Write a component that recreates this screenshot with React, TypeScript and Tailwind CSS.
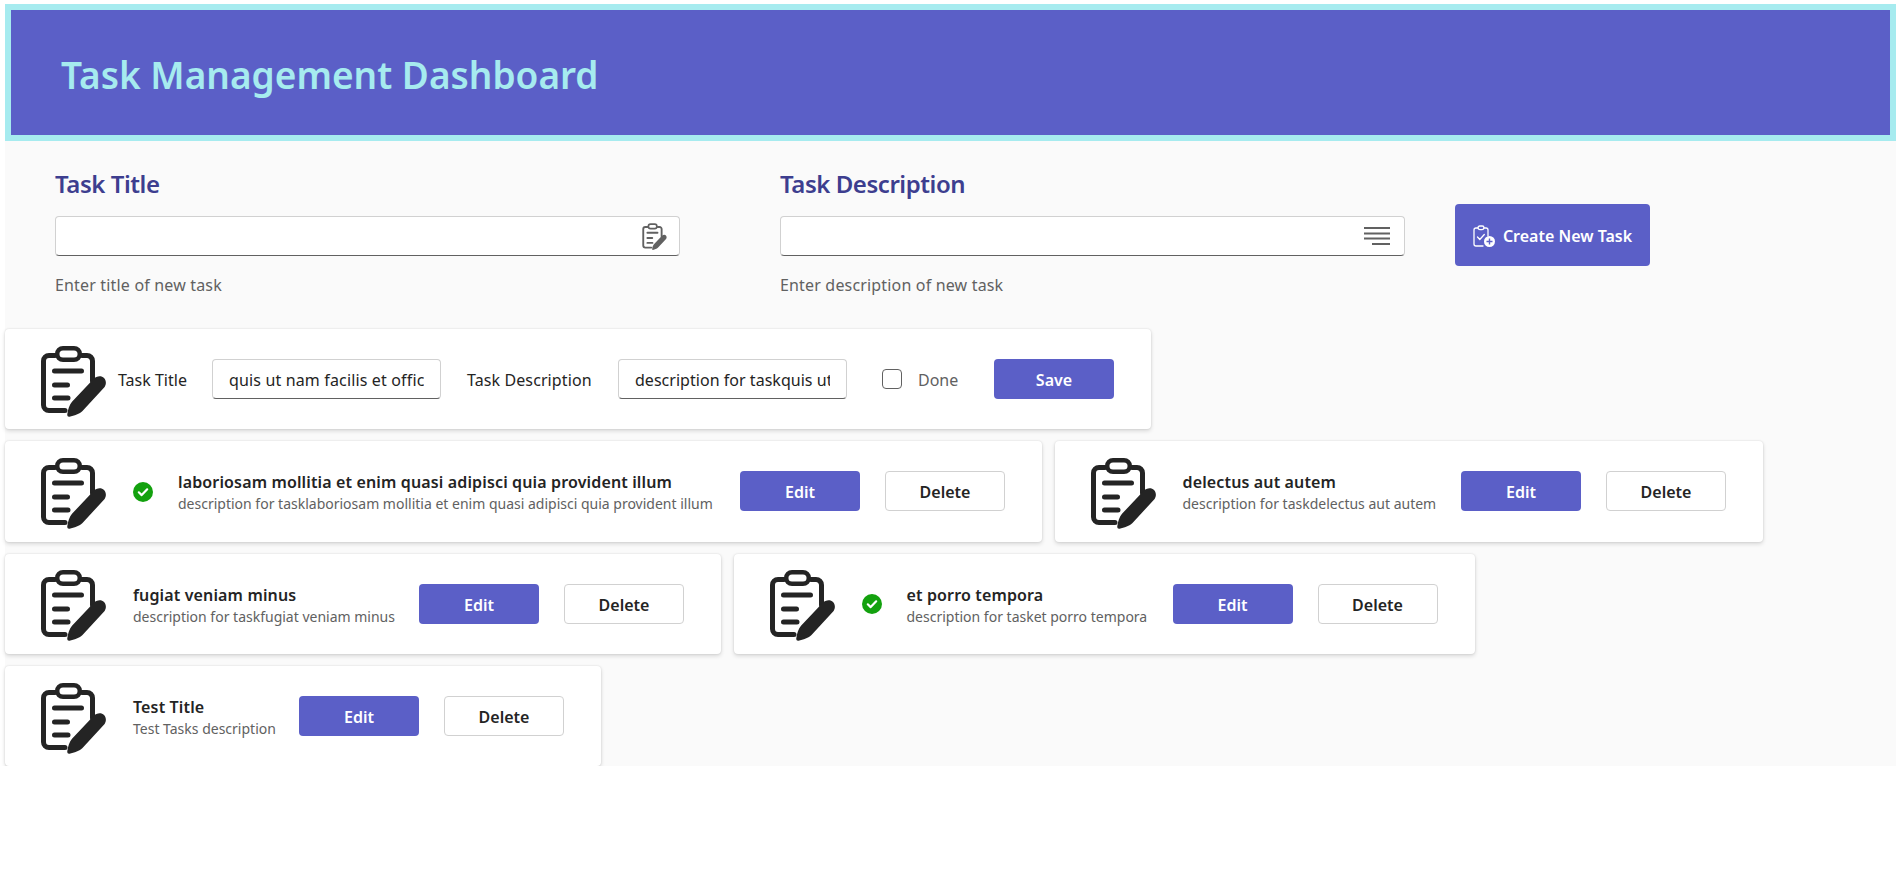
import React from "react";

const FONT = "font-['Noto_Sans','Open_Sans',sans-serif]";

function TaskIcon({ className = "", color = "#242424" }: { className?: string; color?: string }) {
  return (
    <svg viewBox="0 0 65 72" className={className} fill="none" aria-hidden="true">
      <path d="M14 10.5H8a5.5 5.5 0 0 0-5.5 5.5v44A5.5 5.5 0 0 0 8 65.5h16" stroke={color} strokeWidth="5" strokeLinecap="round" />
      <path d="M41 10.5h5a5.5 5.5 0 0 1 5.5 5.5v20" stroke={color} strokeWidth="5" strokeLinecap="round" />
      <rect x="16.2" y="3.2" width="22.6" height="11.6" rx="5.8" stroke={color} strokeWidth="4.5" />
      <path d="M13.500 26h27M13.500 40h13M13.500 53h13.500" stroke={color} strokeWidth="5" strokeLinecap="round" />
      <path d="M52.500 34c3.200-3.200 8-3.500 10.500-1 2.800 2.800 2.300 7.300-.3 10L41.500 66c-2.700 2.700-8.300 4.700-13 5.700-1.500.3-2.500-.7-2.200-2.500.7-5 2.200-9.400 4.700-12.400z" fill={color} />
    </svg>
  );
}

function LinesIcon() {
  return (
    <svg viewBox="0 0 26 18" className="h-[18px] w-[26px]" fill="none" aria-hidden="true">
      <path d="M0 1h26M0 6.500h26M0 11.500h26M8 17h18" stroke="#616161" strokeWidth="2.200" />
    </svg>
  );
}

function CreateIcon() {
  return (
    <svg viewBox="0 0 22 22" className="h-[22px] w-[22px]" fill="none" aria-hidden="true">
      <path d="M5 3H3a2 2 0 0 0-2 2v14a2 2 0 0 0 2 2h7M11 3h2a2 2 0 0 1 2 2v6" stroke="white" strokeWidth="1.300" strokeLinecap="round" />
      <rect x="5" y="1" width="6" height="3.600" rx="1.800" stroke="white" strokeWidth="1.300" />
      <path d="M4.500 12l2.300 2.500 4.500-5" stroke="white" strokeWidth="1.300" strokeLinecap="round" strokeLinejoin="round" />
      <circle cx="16.500" cy="16.500" r="5.500" fill="white" />
      <path d="M16.500 13.500v6M13.500 16.500h6" stroke="#5b5fc7" strokeWidth="1.400" />
    </svg>
  );
}

function DoneIcon() {
  return (
    <svg viewBox="0 0 20 20" className="h-5 w-5 shrink-0" aria-hidden="true">
      <circle cx="10" cy="10" r="10" fill="#13a10e" />
      <path d="M5.800 10.300l2.900 2.800 5.500-5.800" fill="none" stroke="white" strokeWidth="2.200" strokeLinecap="round" strokeLinejoin="round" />
    </svg>
  );
}

type Task = { title: string; description: string; done?: boolean; textWidth: string };

const tasks: Task[] = [
  { title: "laboriosam mollitia et enim quasi adipisci quia provident illum", description: "description for tasklaboriosam mollitia et enim quasi adipisci quia provident illum", done: true, textWidth: "w-[537px]" },
  { title: "delectus aut autem", description: "description for taskdelectus aut autem", textWidth: "w-[253.5px]" },
  { title: "fugiat veniam minus", description: "description for taskfugiat veniam minus", textWidth: "w-[261px]" },
  { title: "et porro tempora", description: "description for tasket porro tempora", done: true, textWidth: "w-[241px]" },
  { title: "Test Title", description: "Test Tasks description", textWidth: "w-[141px]" },
];

const cardClass =
  "flex h-[100.33px] items-center rounded-[4px] bg-white pl-[36px] pr-[37px] shadow-[0_2px_4px_rgba(0,0,0,0.14),0_0_2px_rgba(0,0,0,0.12)]";
const primaryClass =
  "flex h-10 w-[120px] items-center justify-center rounded-[4px] bg-[#5b5fc7] pt-[2px] text-base font-semibold text-white";

function TaskCard({ task }: { task: Task }) {
  return (
    <div className={cardClass}>
      <TaskIcon className="mt-[3px] h-[72px] w-[65px] shrink-0" />
      {task.done ? (
        <div className="ml-[27px] mt-[1px]">
          <DoneIcon />
        </div>
      ) : null}
      <div className={`${task.done ? "ml-[25px]" : "ml-[27px]"} ${task.textWidth} flex flex-col pt-[3px]`}>
        <div className="whitespace-nowrap text-base font-semibold leading-[23px] tracking-[0.14px] text-[#242424]">{task.title}</div>
        <div className="whitespace-nowrap text-sm leading-[20px] text-[#616161]">{task.description}</div>
      </div>
      <button className={`ml-[25px] ${primaryClass}`}>Edit</button>
      <button className="ml-[25px] h-10 w-[120px] rounded-[4px] border border-[#d1d1d1] bg-white pt-[2px] text-base font-semibold text-[#242424]">
        Delete
      </button>
    </div>
  );
}

function EditInput({ value, tracking }: { value: string; tracking: string }) {
  return (
    <input
      readOnly
      value={value}
      className={`h-10 w-[229px] rounded-[4px] border border-[#d1d1d1] border-b-[#616161] bg-white px-4 pt-[2px] text-base text-[#242424] outline-none ${tracking}`}
    />
  );
}

function FormField({ label, help, icon, iconPad }: { label: string; help: string; icon: React.ReactNode; iconPad: string }) {
  return (
    <div className="flex w-[625px] flex-col">
      <div className="text-2xl font-semibold leading-8 tracking-[-0.45px] text-[#3d3e8f]">{label}</div>
      <div className={`mt-4 flex h-10 items-center justify-end rounded-[4px] border border-[#d1d1d1] border-b-[#616161] bg-white ${iconPad}`}>
        {icon}
      </div>
      <div className="mt-[18px] text-base leading-[22px] tracking-[0.17px] text-[#616161]">{help}</div>
    </div>
  );
}

export default function App() {
  return (
    <div className={`${FONT} mx-[5px] mt-1 bg-[#fafafa]`}>
      <header className="flex h-[137px] items-center border-[6px] border-[#a6ebef] bg-[#5b5fc7] pl-[50px]">
        <h1 className="mt-[5px] text-[37px] font-semibold leading-10 text-[#a6ebef]">Task Management Dashboard</h1>
      </header>

      <section className="flex pb-[33px] pl-[50px] pt-[27px]">
        <FormField label="Task Title" help="Enter title of new task" iconPad="pr-[12px]" icon={<TaskIcon className="h-[27px] w-[25px]" color="#616161" />} />
        <div className="ml-[100px]">
          <FormField label="Task Description" help="Enter description of new task" iconPad="pr-[14px]" icon={<LinesIcon />} />
        </div>
        <button className="ml-[50px] mt-9 flex h-[62px] w-[195px] items-center justify-center gap-2 rounded-[4px] bg-[#5b5fc7] pt-[1px] text-base font-semibold text-white">
          <CreateIcon />
          Create New Task
        </button>
      </section>

      <section className="flex flex-wrap gap-x-[12.5px] gap-y-3">
        <div className={cardClass}>
          <TaskIcon className="mt-[3px] h-[72px] w-[65px] shrink-0" />
          <span className="ml-[12px] w-[69px] whitespace-nowrap pt-[2px] text-base text-[#242424]">Task Title</span>
          <div className="ml-[25px] flex">
            <EditInput value="quis ut nam facilis et officia qui" tracking="tracking-[0.15px]" />
          </div>
          <span className="ml-[26px] w-[125px] whitespace-nowrap pt-[2px] text-base tracking-[0.1px] text-[#242424]">Task Description</span>
          <div className="ml-[26px] flex">
            <EditInput value="description for taskquis ut nam facilis et officia qui" tracking="tracking-[0.03px]" />
          </div>
          <span className="ml-[35px] h-5 w-5 rounded-[4px] border border-[#616161] bg-white" />
          <span className="ml-4 w-[41px] pt-[2px] text-base text-[#616161]">Done</span>
          <button className={`ml-[35px] ${primaryClass}`}>Save</button>
        </div>
        {tasks.map((t) => (
          <TaskCard key={t.title} task={t} />
        ))}
      </section>
    </div>
  );
}
